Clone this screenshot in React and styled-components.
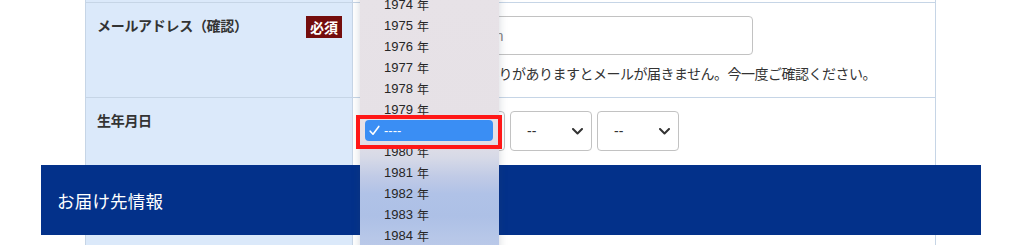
import styled, { createGlobalStyle } from "styled-components";

const GlobalStyle = createGlobalStyle`
  html, body {
    margin: 0;
    padding: 0;
    background: #fff;
  }
  body {
    font-family: "Noto Sans CJK JP", "Noto Sans", sans-serif;
    color: #333;
  }
`;

const Page = styled.div`
  position: relative;
  width: 1020px;
  height: 245px;
  overflow: hidden;
  display: flex;
  flex-direction: column;
`;

const Table = styled.div`
  margin-left: 85px;
  width: 851px;
  display: grid;
  grid-template-columns: 267px 1fr;
  border-left: 1px solid #c6d5e6;
  border-right: 1px solid #c6d5e6;
  box-sizing: border-box;
  flex: ${(p) => (p.$grow ? 1 : "none")};
`;

const Label = styled.div`
  background: #dbe9fa;
  border-right: 1px solid #c6d5e6;
  border-bottom: ${(p) => (p.$last ? "none" : "1px solid #c6d5e6")};
  height: ${(p) => p.$h || "auto"};
  box-sizing: border-box;
  padding: ${(p) => (p.$h ? "0" : "12px 10px 0 11px")};
  display: flex;
  justify-content: space-between;
  align-items: flex-start;
`;

const LabelText = styled.span`
  font-size: 14px;
  font-weight: 700;
  line-height: 20px;
  letter-spacing: -0.3px;
  color: #333;
`;

const Badge = styled.span`
  background: #740d0d;
  color: #fff;
  font-size: 14px;
  font-weight: 700;
  line-height: 22px;
  padding: 0 4px;
  margin-top: 1px;
`;

const Value = styled.div`
  background: #fff;
  border-bottom: ${(p) => (p.$last ? "none" : "1px solid #c6d5e6")};
  height: ${(p) => p.$h || "auto"};
  box-sizing: border-box;
  padding: ${(p) => (p.$h ? "0" : "13px 0 14px 24px")};
`;

const TextInput = styled.div`
  width: 376px;
  height: 39px;
  box-sizing: border-box;
  border: 1px solid #c2c2c2;
  border-radius: 4px;
  padding: 0 14px;
  display: flex;
  align-items: center;
  font-family: "Liberation Sans", "Noto Sans CJK JP", sans-serif;
  font-size: 14px;
  color: #808080;
`;

const Note = styled.p`
  margin: 8px 0 0;
  font-size: 14px;
  line-height: 20px;
  letter-spacing: -0.5px;
  color: #333;
  white-space: nowrap;
`;

const SelectRow = styled.div`
  display: flex;
  gap: 5px;
`;

const SelectBox = styled.div`
  width: ${(p) => p.$w}px;
  height: 40px;
  box-sizing: border-box;
  border: 1px solid #c2c2c2;
  border-radius: 4px;
  background: #fff;
  padding: 0 8px 0 16px;
  display: flex;
  align-items: center;
  justify-content: space-between;
  font-family: "Liberation Sans", sans-serif;
  font-size: 14px;
  color: #333;
`;

const Banner = styled.div`
  margin-left: 41px;
  width: 940px;
  height: 70px;
  background: #03318a;
  color: #fff;
  display: flex;
  align-items: center;
  padding-left: 16px;
  box-sizing: border-box;
  font-size: 17.5px;
  letter-spacing: 0.2px;
  flex: none;
`;

const Menu = styled.div`
  position: absolute;
  left: 360px;
  top: -6px;
  width: 139px;
  height: 262px;
  background: linear-gradient(
    to bottom,
    #e7e2e7 0px,
    #e6e1e6 142px,
    #d6d9e7 164px,
    #c1cbe6 182px,
    #b0c2e7 200px,
    #adc0e6 222px,
    #b7c7e8 244px,
    #bdcbea 262px
  );
  box-shadow: 0 0 8px rgba(60, 70, 90, 0.22);
`;

const Item = styled.div`
  height: 21px;
  margin: 0 6px 0 5px;
  padding-left: 19px;
  display: flex;
  align-items: center;
  border-radius: 4px;
  font-family: "Liberation Sans", "Noto Sans CJK JP", sans-serif;
  font-size: 13px;
  color: ${(p) => (p.$selected ? "#fff" : "#262626")};
  background: ${(p) => (p.$selected ? "#3a8ef4" : "transparent")};
  position: relative;
`;

const Nen = styled.span`
  font-family: "Noto Sans CJK JP", sans-serif;
  font-size: 12px;
  margin-left: 4px;
`;

const Check = styled.svg`
  position: absolute;
  left: 4px;
  top: 5px;
`;

const Highlight = styled.div`
  position: absolute;
  left: 356px;
  top: 115px;
  width: 146px;
  height: 34px;
  box-sizing: border-box;
  border: 4.5px solid #ff1717;
`;

const Chevron = () => (
  <svg width="11" height="7" viewBox="0 0 11 7">
    <path d="M1 1l4.5 4.5L10 1" fill="none" stroke="#333" strokeWidth="2" strokeLinecap="round" strokeLinejoin="round" />
  </svg>
);

const years = ["1974", "1975", "1976", "1977", "1978", "1979", null, "1980", "1981", "1982", "1983", "1984"];

const App = () => {
  return (
    <>
      <GlobalStyle />
      <Page>
        <Table>
          <Label $h="3px" />
          <Value $h="3px" />
          <Label>
            <LabelText>メールアドレス（確認）</LabelText>
            <Badge>必須</Badge>
          </Label>
          <Value>
            <TextInput>xx@example.com</TextInput>
            <Note>メールアドレスに誤りがありますとメールが届きません。今一度ご確認ください。</Note>
          </Value>
          <Label $last>
            <LabelText>生年月日</LabelText>
          </Label>
          <Value $last>
            <SelectRow>
              <SelectBox $w={128}>
                ----
                <Chevron />
              </SelectBox>
              <SelectBox $w={82}>
                --
                <Chevron />
              </SelectBox>
              <SelectBox $w={82}>
                --
                <Chevron />
              </SelectBox>
            </SelectRow>
          </Value>
        </Table>
        <Banner>お届け先情報</Banner>
        <Table $grow>
          <Label $h="100%" $last />
          <Value $h="100%" $last />
        </Table>
        <Menu>
          {years.map((y, i) =>
            y ? (
              <Item key={i}>
                {y}
                <Nen>年</Nen>
              </Item>
            ) : (
              <Item key={i} $selected>
                <Check width="11" height="11" viewBox="0 0 11 11">
                  <path d="M1.2 6.2l2.8 3L9.8 1.4" fill="none" stroke="#fff" strokeWidth="1.6" strokeLinecap="round" strokeLinejoin="round" />
                </Check>
                ----
              </Item>
            )
          )}
        </Menu>
        <Highlight />
      </Page>
    </>
  );
};

export default App;
